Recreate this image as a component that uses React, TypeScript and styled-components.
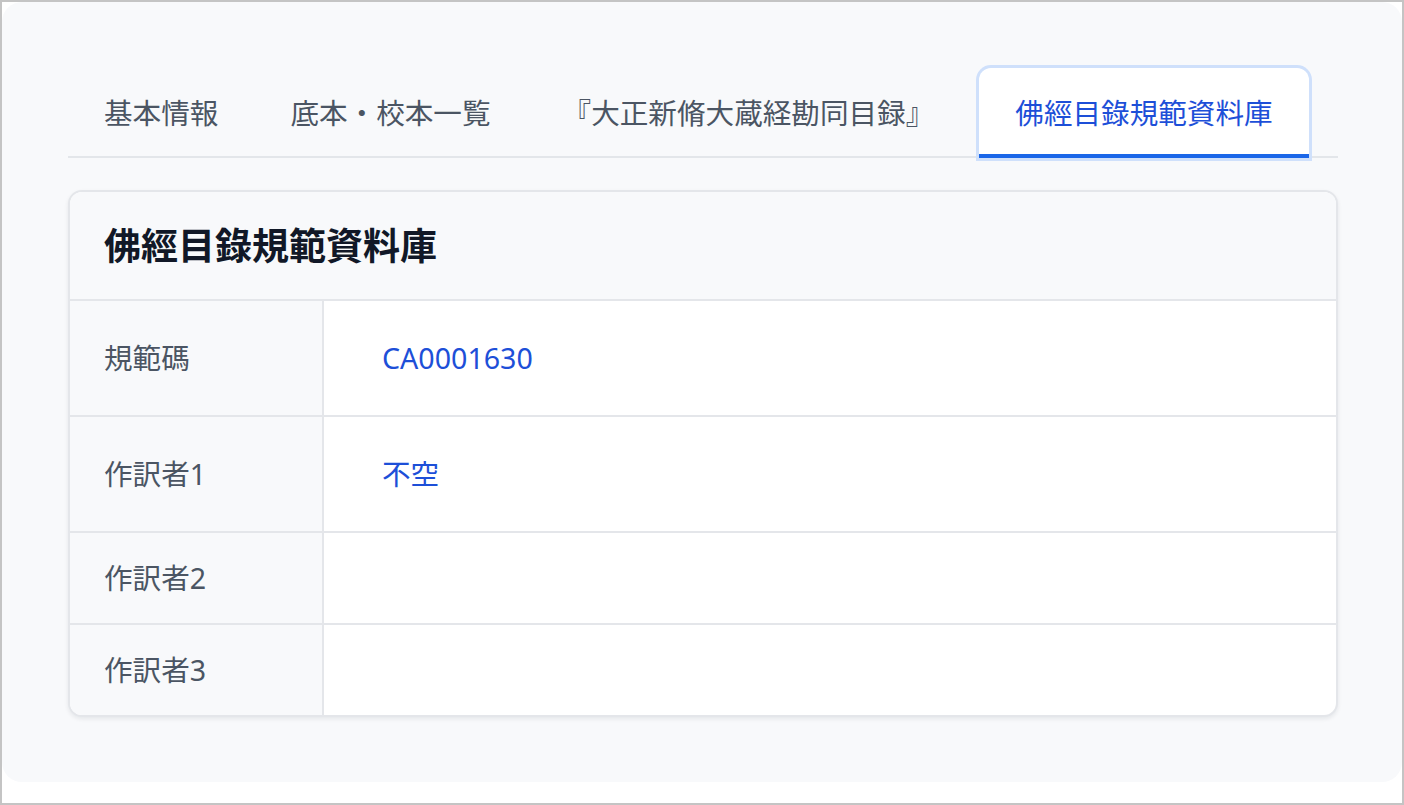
import React, { FC } from 'react';
import styled, { createGlobalStyle } from 'styled-components';

const GlobalStyle = createGlobalStyle`
  html, body {
    margin: 0;
    padding: 0;
    background: #ffffff;
  }
  body {
    font-family: "Noto Sans", "Noto Sans CJK JP", sans-serif;
    -webkit-font-smoothing: antialiased;
  }
  * {
    box-sizing: border-box;
  }
`;

const Frame = styled.div`
  width: 1404px;
  height: 805px;
  border: 2px solid #c4c4c4;
  background: #ffffff;
  overflow: hidden;
`;

const Panel = styled.div`
  height: 780px;
  background: #f8f9fb;
  border-radius: 20px;
  padding: 66px 64px 0 66px;
`;

const TabList = styled.div`
  display: flex;
  align-items: flex-end;
  border-bottom: 2px solid #e3e6ea;
`;

const Tab = styled.div<{ $active?: boolean }>`
  height: 90px;
  padding: 4px 36px 0;
  margin-bottom: -2px;
  margin-left: ${(p) => (p.$active ? '9px' : '0')};
  display: flex;
  align-items: center;
  font-size: 28.6px;
  line-height: 36px;
  white-space: nowrap;
  color: ${(p) => (p.$active ? '#1d4fd8' : '#4b5563')};
  background: ${(p) => (p.$active ? '#ffffff' : 'transparent')};
  border-bottom: 4px solid ${(p) => (p.$active ? '#1a66e8' : 'transparent')};
  border-radius: ${(p) => (p.$active ? '12px 12px 0 0' : '0')};
  box-shadow: ${(p) => (p.$active ? '0 0 0 3px #cfe0fb' : 'none')};
`;

const Card = styled.div`
  margin-top: 32px;
  background: #ffffff;
  border: 2px solid #e4e6ea;
  border-radius: 14px;
  overflow: hidden;
  box-shadow: 0 2px 4px rgba(17, 24, 39, 0.08);
`;

const CardHeader = styled.div`
  background: #f8f9fb;
  padding: 32px 34px 31px;
  border-bottom: 2px solid #e4e6ea;
`;

const CardTitle = styled.h2`
  margin: 0;
  font-size: 37px;
  line-height: 44px;
  font-weight: 700;
  color: #111827;
`;

const Row = styled.div`
  display: grid;
  grid-template-columns: 254px 1fr;
  & + & {
    border-top: 2px solid #e4e6ea;
  }
`;

const Label = styled.div`
  background: #f8f9fb;
  border-right: 2px solid #e4e6ea;
  padding: 27px 34px;
  display: flex;
  align-items: center;
  font-size: 28.6px;
  line-height: 36px;
  color: #4b5563;
`;

const Value = styled.div`
  display: flex;
  align-items: center;
  padding: 0 58px;
  font-size: 28.6px;
  line-height: 36px;
  color: #1d4fd8;

  &:not(:empty) {
    padding-top: 39px;
    padding-bottom: 39px;
  }
`;

const tabs = ['基本情報', '底本・校本一覧', '『大正新脩大蔵経勘同目録』', '佛經目錄規範資料庫'];

const rows: { label: string; value?: string }[] = [
  { label: '規範碼', value: 'CA0001630' },
  { label: '作訳者1', value: '不空' },
  { label: '作訳者2' },
  { label: '作訳者3' },
];

const App: FC = () => (
  <>
    <GlobalStyle />
    <Frame>
      <Panel>
        <TabList>
          {tabs.map((t, i) => (
            <Tab key={t} $active={i === tabs.length - 1}>
              {t}
            </Tab>
          ))}
        </TabList>
        <Card>
          <CardHeader>
            <CardTitle>佛經目錄規範資料庫</CardTitle>
          </CardHeader>
          {rows.map((r) => (
            <Row key={r.label}>
              <Label>{r.label}</Label>
              <Value>{r.value}</Value>
            </Row>
          ))}
        </Card>
      </Panel>
    </Frame>
  </>
);

export default App;
